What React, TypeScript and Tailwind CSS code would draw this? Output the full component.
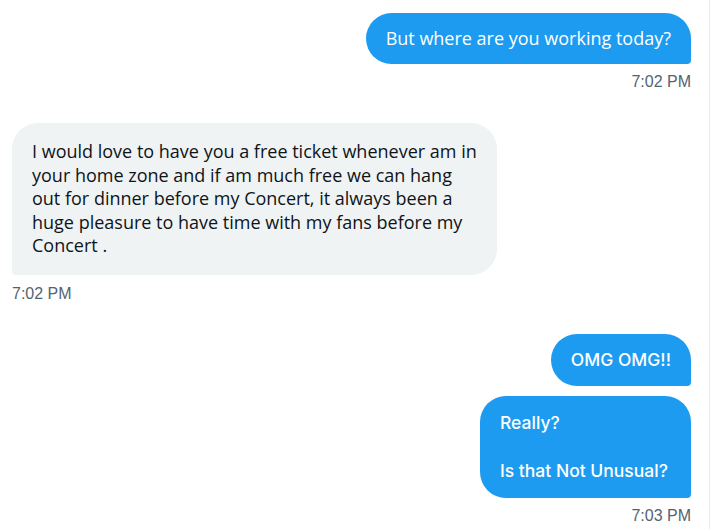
export default function App() {
  return (
    <div className="w-[713px] h-[529px] bg-white overflow-hidden">
      <div className="w-[710px] h-full border-r border-[#e6ecf0] pl-[12px] pr-[18px] pt-[13px] flex flex-col font-['Liberation_Sans',Arial,sans-serif]">
        {/* outgoing */}
        <div className="self-end bg-[#1d9bf0] text-white rounded-[26px] rounded-br-[4px] px-5 py-[13px] text-[18px] leading-[25px] font-['Open_Sans',sans-serif]">
          But where are you working today?
        </div>
        <div className="self-end mt-[9px] text-[16px] leading-[18px] text-[#536471]">7:02 PM</div>

        {/* incoming */}
        <div className="self-start mt-[32px] w-[485px] bg-[#eff3f4] text-[#0f1419] rounded-[26px] rounded-bl-[4px] pl-5 pr-3 py-[17px] text-[18px] leading-[23.5px] font-['Open_Sans',sans-serif]">
          I would love to have you a free ticket whenever am in<br />
          your home zone and if am much free we can hang<br />
          out for dinner before my Concert, it always been a<br />
          huge pleasure to have time with my fans before my<br />
          Concert .
        </div>
        <div className="self-start mt-[10px] text-[16px] leading-[18px] text-[#536471]">7:02 PM</div>

        {/* outgoing */}
        <div className="self-end mt-[31px] bg-[#1d9bf0] text-white rounded-[26px] rounded-br-[4px] px-5 py-[14px] text-[17.5px] leading-[24px] font-medium font-['Inter',sans-serif]">
          OMG OMG!!
        </div>
        <div className="self-end mt-[10px] w-[211px] bg-[#1d9bf0] text-white rounded-[26px] rounded-br-[4px] px-5 py-[15px] text-[17.5px] leading-[24px] font-medium font-['Inter',sans-serif]">
          <p>Really?</p>
          <p>&nbsp;</p>
          <p>Is that Not Unusual?</p>
        </div>
        <div className="self-end mt-[9px] text-[16px] leading-[18px] text-[#536471]">7:03 PM</div>
      </div>
    </div>
  );
}
